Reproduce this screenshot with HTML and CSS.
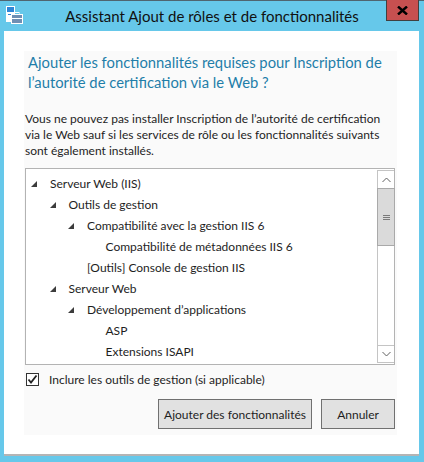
FILE: index.html
```html
<!DOCTYPE html>
<html lang="fr">
<head>
<meta charset="utf-8">
<title>Assistant Ajout de rôles et de fonctionnalités</title>
<link rel="stylesheet" href="styles.css">
</head>
<body>
<div class="window">
  <div class="titlebar">
    <svg class="app-icon" width="17" height="18" viewBox="0 0 17 18">
      <rect x="0.5" y="0.5" width="8" height="15" fill="#2f86d6" stroke="#ffffff"/>
      <rect x="1" y="6" width="7" height="9" fill="#ffffff"/>
      <rect x="2" y="8" width="5" height="1" fill="#2f86d6"/>
      <rect x="5.5" y="8.5" width="11" height="9" fill="#6f8fb3" stroke="#ffffff"/>
      <rect x="9" y="6.5" width="4" height="2" fill="none" stroke="#ffffff"/>
      <rect x="6" y="12" width="10" height="1" fill="#ffffff"/>
    </svg>
    <div class="title">Assistant Ajout de rôles et de fonctionnalités</div>
    <div class="close-btn">
      <svg width="11" height="9" viewBox="0 0 11 9">
        <path d="M1 0.5 L10 8.5 M10 0.5 L1 8.5" stroke="#000" stroke-width="2.4"/>
      </svg>
    </div>
  </div>
  <div class="client">
    <div class="panel">
      <h1 class="heading">Ajouter les fonctionnalités requises pour Inscription de l’autorité de certification via le Web ?</h1>
      <p class="intro">Vous ne pouvez pas installer Inscription de l’autorité de certification via le Web sauf si les services de rôle ou les fonctionnalités suivants sont également installés.</p>
      <div class="treebox">
        <ul class="tree">
          <li class="row l0"><span class="exp"></span>Serveur Web (IIS)</li>
          <li class="row l1"><span class="exp"></span>Outils de gestion</li>
          <li class="row l2"><span class="exp"></span>Compatibilité avec la gestion IIS 6</li>
          <li class="row l3"><span class="noexp"></span>Compatibilité de métadonnées IIS 6</li>
          <li class="row l2"><span class="noexp"></span>[Outils] Console de gestion IIS</li>
          <li class="row l1"><span class="exp"></span>Serveur Web</li>
          <li class="row l2"><span class="exp"></span>Développement d’applications</li>
          <li class="row l3"><span class="noexp"></span>ASP</li>
          <li class="row l3"><span class="noexp"></span>Extensions ISAPI</li>
        </ul>
        <div class="scrollbar">
          <div class="sb-btn sb-up">
            <svg width="9" height="6" viewBox="0 0 9 6"><path d="M0.5 5 L4.5 1 L8.5 5" fill="none" stroke="#606060" stroke-width="1"/></svg>
          </div>
          <div class="sb-thumb">
            <svg width="7" height="5" viewBox="0 0 7 5"><path d="M0 0.5 H7 M0 2.5 H7 M0 4.5 H7" stroke="#7a7a7a" stroke-width="1"/></svg>
          </div>
          <div class="sb-track"></div>
          <div class="sb-btn sb-down">
            <svg width="9" height="6" viewBox="0 0 9 6"><path d="M0.5 1 L4.5 5 L8.5 1" fill="none" stroke="#606060" stroke-width="1"/></svg>
          </div>
        </div>
      </div>
      <label class="check-row">
        <span class="checkbox">
          <svg width="11" height="11" viewBox="0 0 11 11"><path d="M1.5 5.5 L4 8.5 L9.5 1.5" fill="none" stroke="#222" stroke-width="1.8"/></svg>
        </span>
        <span class="check-label">Inclure les outils de gestion (si applicable)</span>
      </label>
      <div class="buttons">
        <button class="btn btn-add">Ajouter des fonctionnalités</button>
        <button class="btn btn-cancel">Annuler</button>
      </div>
    </div>
  </div>
</div>
</body>
</html>
```

FILE: styles.css
```css
* { box-sizing: border-box; }

html, body {
  margin: 0;
  padding: 0;
}

body {
  width: 424px;
  height: 462px;
  background: #66c8ea;
  font-family: "Lato", "Segoe UI", "Noto Sans", sans-serif;
  color: #1e1e1e;
  overflow: hidden;
}

.window {
  width: 424px;
  height: 462px;
  display: flex;
  flex-direction: column;
}

.titlebar {
  height: 31px;
  border-top: 1px solid #4f6570;
  display: grid;
  grid-template-columns: 1fr auto 1fr;
  align-items: start;
}

.app-icon {
  justify-self: start;
  margin: 5px 0 0 6px;
}

.title {
  font-size: 15px;
  line-height: 20px;
  margin-top: 5px;
  color: #111;
  white-space: nowrap;
}

.close-btn {
  justify-self: end;
  margin-right: 5px;
  margin-top: -1px;
  width: 33px;
  height: 21px;
  background: #c75050;
  border: 1px solid #404040;
  border-top: none;
  display: flex;
  align-items: center;
  justify-content: center;
}

.client {
  margin: 0 5px 0 4px;
  height: 425px;
  background: #ffffff;
  border-bottom: 2px solid #b4b4b4;
  padding: 20px 22px 0 20px;
}

.panel {
  height: 384px;
  background: #fafafa;
  padding: 1px 0 6px 0;
  display: flex;
  flex-direction: column;
}

.heading {
  margin: 0;
  padding: 0 0 0 4px;
  font-size: 14.8px;
  font-weight: normal;
  line-height: 20px;
  color: #1f7ea9;
}

.intro {
  margin: 19px 0 0 1px;
  font-size: 12px;
  line-height: 16px;
  color: #1e1e1e;
}

.treebox {
  margin: 9px 2px 0 1px;
  height: 197px;
  border: 1px solid #b3b3b3;
  background: #ffffff;
  display: flex;
}

.tree {
  list-style: none;
  margin: 0;
  padding: 4px 0 0 0;
  flex: 1;
  overflow: hidden;
}

.row {
  height: 21px;
  display: flex;
  align-items: center;
  font-size: 12px;
  white-space: nowrap;
  color: #1e1e1e;
}

.l0 { padding-left: 4px; }
.l1 { padding-left: 22.5px; }
.l2 { padding-left: 41px; }
.l3 { padding-left: 59.5px; }

.exp, .noexp {
  width: 20px;
  height: 21px;
  flex: none;
  position: relative;
}

.exp::before {
  content: "";
  position: absolute;
  left: 1px;
  top: 8px;
  width: 0;
  height: 0;
  border-style: solid;
  border-width: 0 0 6px 6px;
  border-color: transparent transparent #3c3c3c transparent;
}

.scrollbar {
  width: 17px;
  margin: 1px 0;
  border: 1px solid #c4c4c4;
  border-right: none;
  display: flex;
  flex-direction: column;
  background: #ffffff;
}

.sb-btn {
  height: 17px;
  display: flex;
  align-items: center;
  justify-content: center;
  flex: none;
}

.sb-down {
  border-top: 1px solid #c4c4c4;
}

.sb-thumb {
  height: 58px;
  margin: 0 -1px;
  background: #dadada;
  border: 1px solid #a9a9a9;
  display: flex;
  align-items: center;
  justify-content: center;
  flex: none;
}

.sb-track {
  flex: 1;
}

.check-row {
  margin: 6px 0 0 2px;
  height: 16px;
  display: flex;
  align-items: center;
  font-size: 12px;
}

.checkbox {
  width: 13px;
  height: 13px;
  border: 1px solid #333333;
  background: #ffffff;
  display: flex;
  align-items: center;
  justify-content: center;
  margin-right: 10px;
}

.check-label {
  color: #1e1e1e;
}

.buttons {
  margin: 12px 2px 0 0;
  display: flex;
  justify-content: flex-end;
  gap: 9px;
}

.btn {
  height: 30px;
  font-family: inherit;
  font-size: 12px;
  color: #1e1e1e;
  background: #e1e1e1;
  border: 1px solid #707070;
  padding: 0;
}

.btn-add { width: 154px; }
.btn-cancel { width: 74px; }
```
